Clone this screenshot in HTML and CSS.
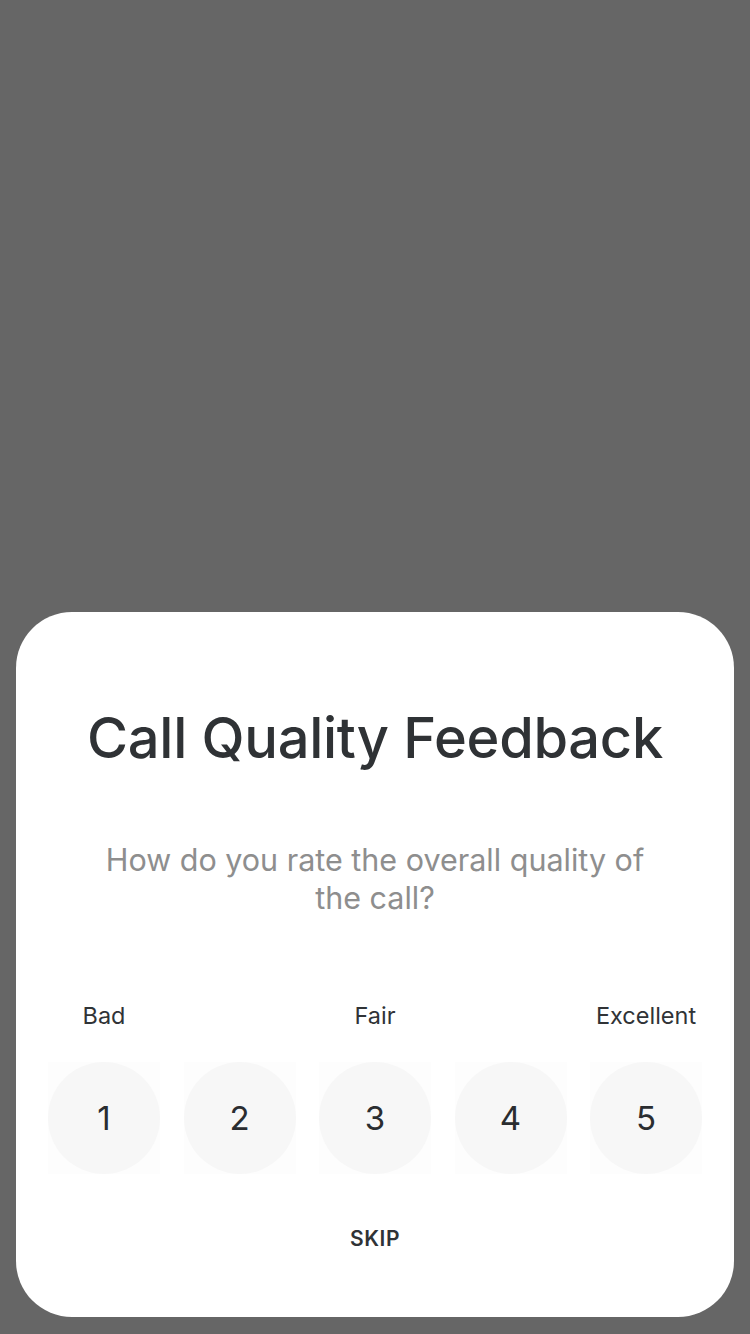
FILE: index.html
```html
<!DOCTYPE html>
<html lang="en">
<head>
<meta charset="utf-8">
<title>Call Quality Feedback</title>
<link rel="stylesheet" href="styles.css">
</head>
<body>
<div class="page">
  <div class="sheet">
    <h1 class="title">Call Quality Feedback</h1>
    <p class="question">How do you rate the overall quality of the call?</p>
    <div class="labels">
      <span class="label">Bad</span>
      <span class="label"></span>
      <span class="label">Fair</span>
      <span class="label"></span>
      <span class="label">Excellent</span>
    </div>
    <div class="ratings">
      <div class="cell"><div class="circle">1</div></div>
      <div class="cell"><div class="circle">2</div></div>
      <div class="cell"><div class="circle">3</div></div>
      <div class="cell"><div class="circle">4</div></div>
      <div class="cell"><div class="circle">5</div></div>
    </div>
    <div class="skip">SKIP</div>
  </div>
</div>
</body>
</html>
```
FILE: styles.css
```css
html, body {
  margin: 0;
  padding: 0;
  background: #666666;
}
body {
  font-family: Inter, "Noto Sans", "Liberation Sans", sans-serif;
}
.page {
  width: 750px;
  height: 1334px;
  box-sizing: border-box;
  display: flex;
  flex-direction: column;
  justify-content: flex-end;
  padding: 0 16px 17px 16px;
}
.sheet {
  background: #ffffff;
  border-radius: 56px;
  height: 705px;
  box-sizing: border-box;
  padding: 90px 32px 0 32px;
  display: flex;
  flex-direction: column;
  align-items: stretch;
}
.title {
  margin: 0;
  font-size: 56px;
  line-height: 72px;
  font-weight: 500;
  color: #2f3235;
  text-align: center;
  letter-spacing: -0.3px;
}
.question {
  margin: 67px auto 0 auto;
  width: 570px;
  font-size: 30.5px;
  line-height: 38px;
  color: #8e8e8e;
  text-align: center;
  font-weight: 400;
}
.labels {
  margin-top: 85px;
  display: flex;
  justify-content: space-between;
}
.label {
  width: 112px;
  height: 28px;
  line-height: 28px;
  font-size: 23.5px;
  color: #303336;
  text-align: center;
  white-space: nowrap;
}
.ratings {
  margin-top: 32px;
  display: flex;
  justify-content: space-between;
}
.cell {
  width: 112px;
  height: 112px;
  background: #fdfdfd;
}
.circle {
  width: 112px;
  height: 112px;
  border-radius: 50%;
  background: #f7f7f7;
  display: flex;
  align-items: center;
  justify-content: center;
  font-size: 33px;
  color: #2a2d30;
}
.skip {
  margin-top: 53px;
  height: 24px;
  line-height: 24px;
  text-align: center;
  font-size: 21px;
  font-weight: 600;
  color: #303336;
  letter-spacing: 0.6px;
}
```
